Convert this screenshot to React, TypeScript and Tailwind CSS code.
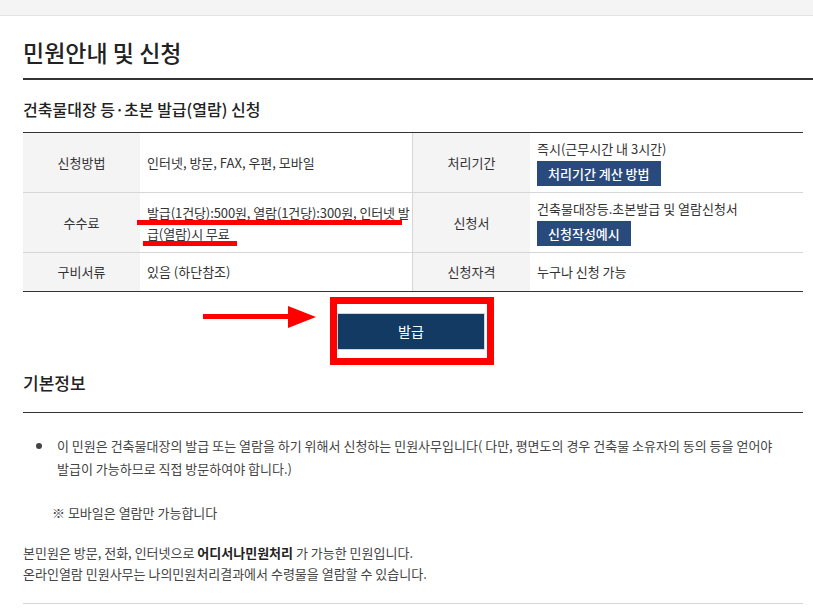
import React from "react";

type Row = {
  leftLabel: string;
  leftValue: React.ReactNode;
  rightLabel: string;
  rightValue: React.ReactNode;
  height: string;
};

const SmallButton = ({ children }: { children: React.ReactNode }) => (
  <button className="mt-[2px] h-[25px] bg-[#294a7c] px-[11px] text-[13px] font-medium leading-[25px] text-white">
    {children}
  </button>
);

const rows: Row[] = [
  {
    leftLabel: "신청방법",
    leftValue: "인터넷, 방문, FAX, 우편, 모바일",
    rightLabel: "처리기간",
    rightValue: (
      <div className="flex flex-col items-start">
        <span>즉시(근무시간 내 3시간)</span>
        <SmallButton>처리기간 계산 방법</SmallButton>
      </div>
    ),
    height: "h-[59px]",
  },
  {
    leftLabel: "수수료",
    leftValue: (
      <span className="break-all leading-[21px] tracking-[-0.1px]">
        발급(1건당):500원, 열람(1건당):300원, 인터넷 발급(열람)시 무료
      </span>
    ),
    rightLabel: "신청서",
    rightValue: (
      <div className="flex flex-col items-start">
        <span>건축물대장등.초본발급 및 열람신청서</span>
        <SmallButton>신청작성예시</SmallButton>
      </div>
    ),
    height: "h-[60px]",
  },
  {
    leftLabel: "구비서류",
    leftValue: "있음 (하단참조)",
    rightLabel: "신청자격",
    rightValue: "누구나 신청 가능",
    height: "h-[39px]",
  },
];

export default function App() {
  return (
    <div
      className="relative min-h-screen bg-white text-[#333]"
      style={{ fontFamily: '"Noto Sans CJK KR", "Noto Sans", sans-serif' }}
    >
      <div className="h-4 border-b border-[#e4e4e4] bg-[#f5f4f4]" />

      <div className="pl-[23px]">
        {/* page title */}
        <h1 className="border-b-2 border-[#333] pb-[10px] pt-[20px] text-[23px] font-medium leading-[32px] text-[#222]">
          민원안내 및 신청
        </h1>

        <div className="mr-[10px]">
          <h2 className="pb-[12px] pt-[18px] text-[16px] font-medium leading-[22px] text-[#222]">
            건축물대장 등·초본 발급(열람) 신청
          </h2>

          {/* info table */}
          <div className="border-b border-t border-[#333] text-[13px] text-[#333]">
            {rows.map((row, i) => (
              <div
                key={row.leftLabel}
                className={`grid grid-cols-[117px_273px_117px_273px] ${row.height} ${
                  i > 0 ? "border-t border-[#d6d6d6]" : ""
                }`}
              >
                <div className="flex items-center justify-center bg-[#f4f4f4]">
                  {row.leftLabel}
                </div>
                <div className="flex items-center border-r border-[#d6d6d6] pl-[7px]">
                  {row.leftValue}
                </div>
                <div className="flex items-center justify-center bg-[#f4f4f4]">
                  {row.rightLabel}
                </div>
                <div className="flex items-center pl-[7px]">{row.rightValue}</div>
              </div>
            ))}
          </div>

          {/* issue button */}
          <div className="flex justify-center pt-[21px]">
            <button className="mr-[4px] h-[37px] w-[148px] border border-[#cdd5df] bg-[#123a62] text-[14px] text-white">
              발급
            </button>
          </div>

          <h3 className="mt-[23px] border-b border-[#333] pb-[19px] text-[17px] font-medium leading-[20px] text-[#222]">
            기본정보
          </h3>

          <div className="pt-[21px] text-[13px] text-[#444]">
            <ul className="list-none">
              <li className="relative pl-[34px] pr-[16px] leading-[23px]">
                <span className="absolute left-[13px] top-[9px] h-[6px] w-[6px] rounded-full bg-[#444]" />
                이 민원은 건축물대장의 발급 또는 열람을 하기 위해서 신청하는 민원사무입니다( 다만, 평면도의 경우 건축물
                소유자의 동의 등을 얻어야 발급이 가능하므로 직접 방문하여야 합니다.)
              </li>
            </ul>
            <p className="mt-[21px] pl-[29px] leading-[23px]">※ 모바일은 열람만 가능합니다</p>
            <div className="mt-[18px] leading-[21px]">
              <p>
                본민원은 방문, 전화, 인터넷으로 <b className="font-bold text-[#222]">어디서나민원처리</b> 가 가능한
                민원입니다.
              </p>
              <p>온라인열람 민원사무는 나의민원처리결과에서 수령물을 열람할 수 있습니다.</p>
            </div>
            <div className="mt-[19px] border-b border-[#d6d6d6]" />
          </div>
        </div>
      </div>

      {/* annotations drawn over the page */}
      <div className="pointer-events-none absolute left-[137px] top-[220px] h-[5px] w-[265px] bg-[#ff0000]" />
      <div className="pointer-events-none absolute left-[143px] top-[241px] h-[5px] w-[94px] bg-[#ff0000]" />
      <div className="pointer-events-none absolute left-[330px] top-[297px] h-[68px] w-[164px] border-[7px] border-[#ff0000]" />
      <svg
        className="pointer-events-none absolute left-[203px] top-[305px]"
        width="114"
        height="24"
        viewBox="0 0 114 24"
      >
        <rect x="0" y="9" width="88" height="5" fill="#ff0000" />
        <polygon points="85,1 113,12 85,23" fill="#ff0000" />
      </svg>
    </div>
  );
}
